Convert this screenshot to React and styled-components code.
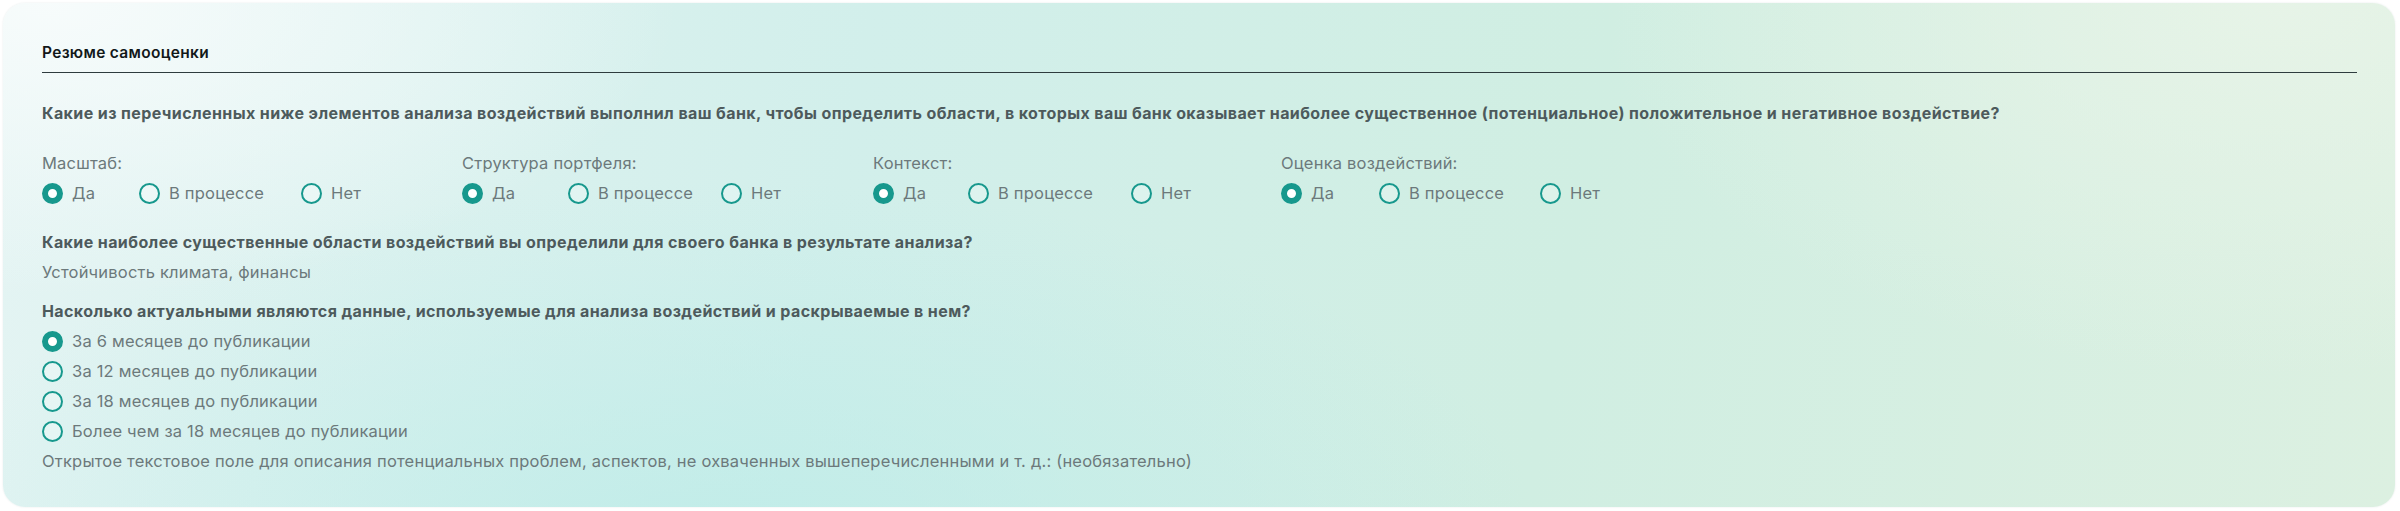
import React from 'react'
import styled, { createGlobalStyle } from 'styled-components'

const GlobalStyle = createGlobalStyle`
  html, body {
    margin: 0;
    padding: 0;
    background: #ffffff;
  }
  body {
    font-family: 'Inter', 'Noto Sans', sans-serif;
    -webkit-font-smoothing: antialiased;
  }
`

const Page = styled.div`
  padding: 3px 5px 4px 3px;
`

const Card = styled.section`
  border-radius: 22px;
  padding: 38px 38px 34px 39px;
  box-shadow: 0 0 2px rgba(40, 80, 80, 0.12);
  background:
    radial-gradient(ellipse 900px 420px at 2% 0%, rgba(248, 252, 252, 0.95), rgba(248, 252, 252, 0) 70%),
    radial-gradient(ellipse 1100px 500px at 30% 110%, rgba(190, 236, 232, 0.9), rgba(190, 236, 232, 0) 75%),
    radial-gradient(ellipse 900px 500px at 95% 0%, rgba(232, 244, 232, 0.9), rgba(232, 244, 232, 0) 75%),
    linear-gradient(100deg, #e4f4f3 0%, #d2efeb 35%, #d0eee2 65%, #dcf0e1 100%);
`

const Header = styled.div`
  padding-bottom: 7px;
  border-bottom: 1.5px solid #2e3c3e;
`

const Title = styled.h2`
  margin: 0;
  font-size: 15.5px;
  letter-spacing: 0.3px;
  line-height: 24px;
  font-weight: 600;
  color: #121819;
`

const Question = styled.p`
  margin: ${p => p.$top || 0}px 0 0;
  font-size: 16px;
  letter-spacing: 0.4px;
  line-height: 24px;
  font-weight: 700;
  color: #4d5a5c;
`

const Text = styled.p`
  margin: ${p => p.$top || 0}px 0 0;
  font-size: 16.5px;
  letter-spacing: 0.2px;
  line-height: 24px;
  font-weight: 400;
  color: #6c797b;
`

const Groups = styled.div`
  display: grid;
  grid-template-columns: 420px 411px 408px auto;
  margin-top: 26px;
`

const Group = styled.div`
  display: flex;
  flex-direction: column;
  gap: 6px;
`

const RadioRow = styled.div`
  display: grid;
  grid-template-columns: ${p => p.$cols};
  align-items: center;
`

const RadioList = styled.div`
  display: flex;
  flex-direction: column;
  gap: 6px;
  margin-top: 6px;
`

const Option = styled.label`
  display: flex;
  align-items: center;
  gap: 9px;
  height: 24px;
  font-size: 16.5px;
  letter-spacing: 0.2px;
  color: #6c797b;
  white-space: nowrap;
  cursor: pointer;
`

const Dot = styled.span`
  box-sizing: border-box;
  width: 21px;
  height: 21px;
  border-radius: 50%;
  flex-shrink: 0;
  border: ${p => (p.$checked ? '6.5px' : '2px')} solid #17988d;
  background: ${p => (p.$checked ? '#ffffff' : 'rgba(255, 255, 255, 0.25)')};
`

const Radio = ({ checked, children }) => (
  <Option>
    <Dot $checked={checked} />
    {children}
  </Option>
)

const groups = [
  { label: 'Масштаб:', cols: '97px 162px auto' },
  { label: 'Структура портфеля:', cols: '106px 153px auto' },
  { label: 'Контекст:', cols: '95px 163px auto' },
  { label: 'Оценка воздействий:', cols: '98px 161px auto' },
]

const periods = [
  'За 6 месяцев до публикации',
  'За 12 месяцев до публикации',
  'За 18 месяцев до публикации',
  'Более чем за 18 месяцев до публикации',
]

const App = () => {
  return (
    <Page>
      <GlobalStyle />
      <Card>
        <Header>
          <Title>Резюме самооценки</Title>
        </Header>

        <Question $top={28}>
          Какие из перечисленных ниже элементов анализа воздействий выполнил ваш банк, чтобы определить области, в которых ваш банк оказывает наиболее существенное (потенциальное) положительное и негативное воздействие?
        </Question>

        <Groups>
          {groups.map(g => (
            <Group key={g.label}>
              <Text>{g.label}</Text>
              <RadioRow $cols={g.cols}>
                <Radio checked>Да</Radio>
                <Radio>В процессе</Radio>
                <Radio>Нет</Radio>
              </RadioRow>
            </Group>
          ))}
        </Groups>

        <Question $top={25}>
          Какие наиболее существенные области воздействий вы определили для своего банка в результате анализа?
        </Question>
        <Text $top={6}>Устойчивость климата, финансы</Text>

        <Question $top={15}>
          Насколько актуальными являются данные, используемые для анализа воздействий и раскрываемые в нем?
        </Question>
        <RadioList>
          {periods.map((p, i) => (
            <Radio key={p} checked={i === 0}>{p}</Radio>
          ))}
        </RadioList>

        <Text $top={6}>
          Открытое текстовое поле для описания потенциальных проблем, аспектов, не охваченных вышеперечисленными и т. д.: (необязательно)
        </Text>
      </Card>
    </Page>
  )
}

export default App
